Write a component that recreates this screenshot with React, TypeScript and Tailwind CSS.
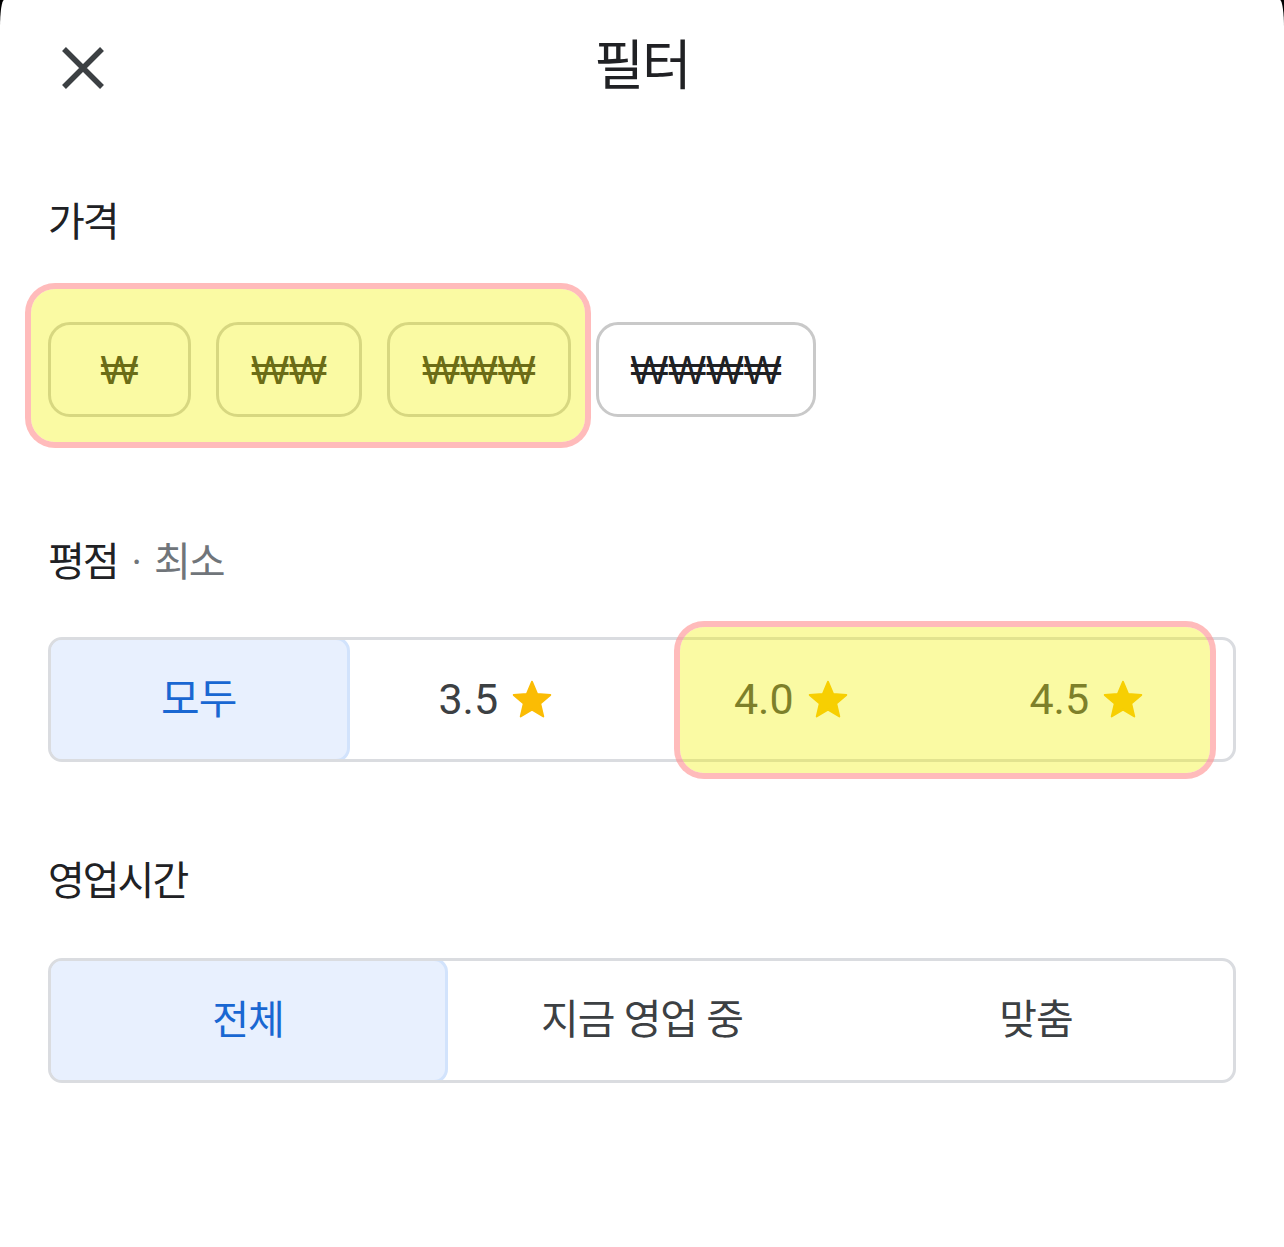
import React from "react";

const priceChips = [
  { label: "₩", width: "w-[143px]" },
  { label: "₩₩", width: "w-[146px]" },
  { label: "₩₩₩", width: "w-[184px]" },
  { label: "₩₩₩₩", width: "w-[220px]" },
];

const ratings = ["3.5", "4.0", "4.5"];
const hours = ["전체", "지금 영업 중", "맞춤"];

const Star = () => (
  <svg viewBox="0 0 24 24" className="h-[44px] w-[44px]" fill="#fbbc04">
    <path
      d="M12 17.27 18.18 21l-1.64-7.03L22 9.24l-7.19-.61L12 2 9.19 8.63 2 9.24l5.46 4.73L5.82 21z"
      stroke="#fbbc04"
      strokeWidth="1"
      strokeLinejoin="round"
    />
  </svg>
);

// translucent marker boxes that sit over the controls
const Highlight = ({ className }: { className: string }) => (
  <div
    className={`pointer-events-none absolute rounded-[30px] border-[6px] border-[rgba(255,150,150,0.65)] bg-[rgba(242,242,0,0.36)] bg-clip-padding ${className}`}
  />
);

const App = () => {
  return (
    <div className="min-h-[1247px] w-full bg-black">
      <div className="min-h-[1247px] w-full rounded-tl-[4px_28px] rounded-tr-[4px_28px] bg-white font-['Roboto','Noto_Sans_CJK_KR',sans-serif] text-[#202124]">
        {/* header */}
        <div className="grid h-[134px] grid-cols-[1fr_auto_1fr] items-center">
          <div className="pl-[61px] pt-[2px]">
            <svg viewBox="0 0 44 44" className="h-[44px] w-[44px]">
              <path
                d="M3 3 41 41M41 3 3 41"
                stroke="#3c4043"
                strokeWidth="5.5"
                strokeLinecap="butt"
              />
            </svg>
          </div>
          <div className="text-[54px] leading-none tracking-[-2px]">필터</div>
          <div />
        </div>

        <div className="px-[48px]">
          {/* price */}
          <div className="mt-[65px] text-[40px] leading-[48px] tracking-[-2px]">가격</div>
          <div className="relative mt-[75px] flex gap-[25px]">
            {priceChips.map((c) => (
              <div
                key={c.label}
                className={`flex h-[95px] items-center justify-center rounded-[22px] border-[3px] border-[#c9c9c9] font-['Liberation_Sans','DejaVu_Sans',sans-serif] text-[40px] text-[#202124] ${c.width}`}
              >
                {c.label}
              </div>
            ))}
            <Highlight className="-left-[23px] -top-[39px] h-[165px] w-[566px]" />
          </div>

          {/* rating */}
          <div className="mt-[122px] flex items-center text-[40px] leading-[48px] tracking-[-2px]">
            <span>평점</span>
            <span className="ml-[14px] text-[#70757a]">·</span>
            <span className="ml-[14px] text-[#70757a]">최소</span>
          </div>
          <div className="relative mt-[50px]">
            <div className="grid h-[125px] grid-cols-4 overflow-hidden rounded-[14px] border-[3px] border-[#dadce0]">
              <div className="-m-[3px] flex items-center justify-center rounded-[14px] border-[3px] border-[#d2e3fc] bg-[#e8f0fe] text-[42px] tracking-[-1px] text-[#1967d2]">
                모두
              </div>
              {ratings.map((r) => (
                <div
                  key={r}
                  className="flex items-center justify-center gap-[12px] pl-[4px] text-[43px] text-[#3c4043]"
                >
                  <span>{r}</span>
                  <Star />
                </div>
              ))}
            </div>
            <Highlight className="left-[626px] -top-[16px] h-[158px] w-[542px]" />
          </div>

          {/* hours */}
          <div className="mt-[96px] text-[40px] leading-[48px] tracking-[-2px]">영업시간</div>
          <div className="mt-[52px] grid h-[125px] grid-cols-3 overflow-hidden rounded-[14px] border-[3px] border-[#dadce0]">
            {hours.map((h, i) => (
              <div
                key={h}
                className={
                  i === 0
                    ? "-m-[3px] flex items-center justify-center rounded-[14px] border-[3px] border-[#d2e3fc] bg-[#e8f0fe] text-[40px] tracking-[-1px] text-[#1967d2]"
                    : "flex items-center justify-center text-[41px] tracking-[-1px] text-[#3c4043]"
                }
              >
                {h}
              </div>
            ))}
          </div>
        </div>
      </div>
    </div>
  );
};

export default App;
